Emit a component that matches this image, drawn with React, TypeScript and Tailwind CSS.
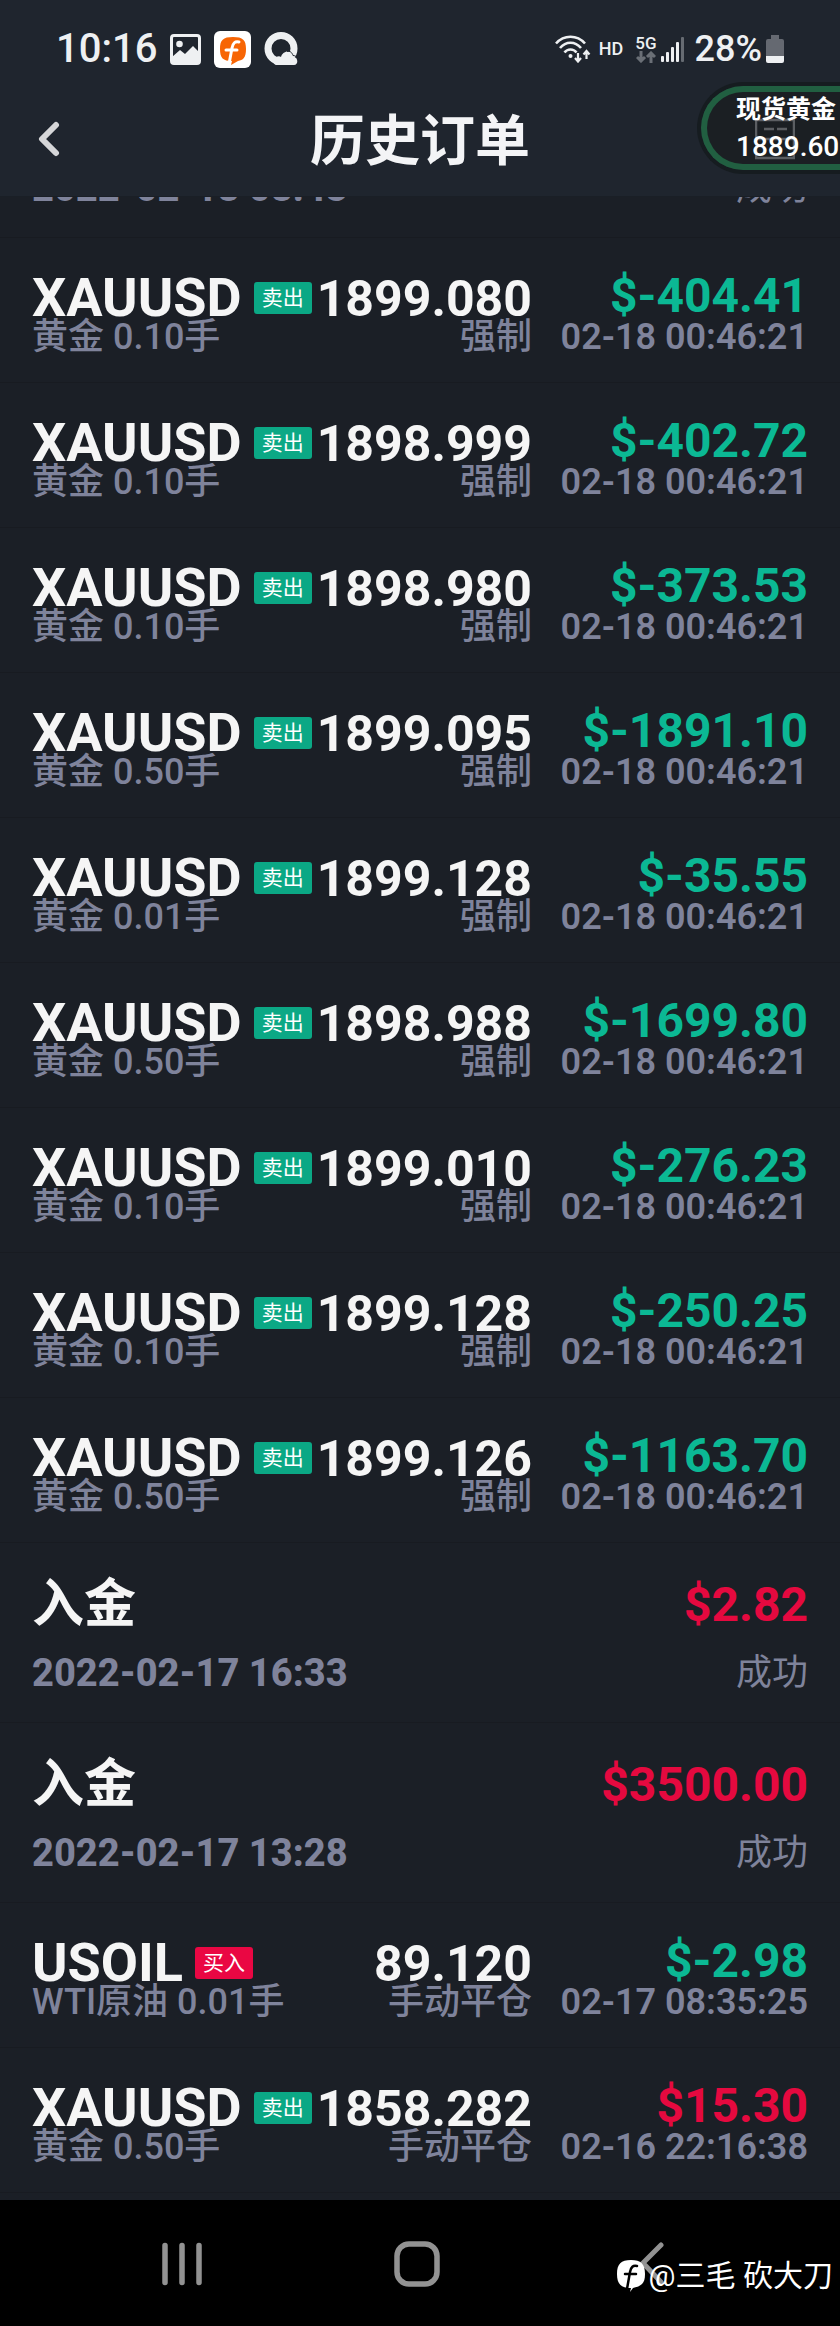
type Trade = {
  kind: 'trade';
  symbol: string;
  name: string;
  lots: string;
  side: 'buy' | 'sell';
  price: string;
  reason: string;
  profit: string;
  time: string;
};

type Deposit = {
  kind: 'deposit';
  amount: string;
  time: string;
};

type Order = Trade | Deposit;

const gold = (lots: string, price: string, profit: string, time = '02-18 00:46:21', reason = '强制'): Trade => ({
  kind: 'trade',
  symbol: 'XAUUSD',
  name: '黄金',
  side: 'sell',
  lots,
  price,
  profit,
  time,
  reason,
});

const orders: Order[] = [
  gold('0.10', '1899.080', '-404.41'),
  gold('0.10', '1898.999', '-402.72'),
  gold('0.10', '1898.980', '-373.53'),
  gold('0.50', '1899.095', '-1891.10'),
  gold('0.01', '1899.128', '-35.55'),
  gold('0.50', '1898.988', '-1699.80'),
  gold('0.10', '1899.010', '-276.23'),
  gold('0.10', '1899.128', '-250.25'),
  gold('0.50', '1899.126', '-1163.70'),
  { kind: 'deposit', amount: '2.82', time: '2022-02-17 16:33' },
  { kind: 'deposit', amount: '3500.00', time: '2022-02-17 13:28' },
  {
    kind: 'trade',
    symbol: 'USOIL',
    name: 'WTI原油',
    lots: '0.01',
    side: 'buy',
    price: '89.120',
    reason: '手动平仓',
    profit: '-2.98',
    time: '02-17 08:35:25',
  },
  gold('0.50', '1858.282', '15.30', '02-16 22:16:38', '手动平仓'),
];

function StatusBar() {
  return (
    <div className="flex h-[86px] items-center justify-between pt-3 pr-14 pl-14 text-[#eef0f2]">
      <div className="flex items-center gap-[13px]">
        <span className="text-[40px] leading-10 font-medium">10:16</span>
        <svg className="h-[31px] w-[31px]" viewBox="0 0 31 31">
          <rect x="1.5" y="1.5" width="28" height="28" rx="2.5" fill="none" stroke="currentColor" strokeWidth="3" />
          <circle cx="9.5" cy="10" r="3.3" fill="currentColor" />
          <path d="M2 23l8-7 5 4 8-8 7 7v10H2z" fill="currentColor" />
        </svg>
        <svg className="h-[37px] w-[37px]" viewBox="0 0 37 37">
          <rect width="37" height="37" rx="6" fill="#fff" />
          <path d="M17 34l1-4c-9 0-12-3-12-12S9 6 19 6s13 3 13 12-3 11-8 12z" fill="#f76504" />
          <path
            d="M25 11c-4-1-6 1-7 6l-3 16M12 19h11"
            fill="none"
            stroke="#fff"
            strokeWidth="3"
            strokeLinecap="round"
          />
        </svg>
        <svg className="h-[34px] w-[34px]" viewBox="0 0 34 34">
          <circle cx="17" cy="16.5" r="13" fill="none" stroke="currentColor" strokeWidth="7" />
          <path
            d="M12 33c-3-1-4-7 0-8 2-1 4-1 5 0 1-5 8-8 11-3 1 1 1 2 1 3 5-1 6 8 1 8z"
            fill="currentColor"
          />
          <path d="M23 19.500c3-1 5 1 6 4 2 0 3 1 4 2" fill="none" stroke="#1f252e" strokeWidth="1" />
        </svg>
      </div>
      <div className="flex items-center">
        <svg className="h-7 w-9" viewBox="0 0 36 28" fill="none" stroke="currentColor" strokeWidth="2.6">
          <path d="M1 8.500c8-9 21-9 29 0M5 13c6-7 15-7 21 0M9.500 17.500c3-4 9-4 12 0" />
          <circle cx="15.500" cy="21" r="2" fill="currentColor" stroke="none" />
          <path d="M23 18v8m-3-3l3 3.500 3-3.500M31.500 24v-8m-3 3.500l3-3.500 3 3.500" strokeWidth="2.200" />
        </svg>
        <span className="ml-2 text-[18px] leading-5 font-medium">HD</span>
        <div className="ml-3 flex flex-col items-center">
          <span className="text-[17px] leading-4 font-medium">5G</span>
          <svg className="h-3 w-5" viewBox="0 0 20 12" fill="none" stroke="#6a6f76" strokeWidth="3">
            <path d="M5 0v10M1 6l4 4 4-4M15 12V2m-4 4l4-4 4 4" />
          </svg>
        </div>
        <svg className="ml-1 h-[26px] w-6" viewBox="0 0 24 26" fill="currentColor">
          <rect x="0" y="20" width="3" height="6" rx="1" />
          <rect x="5" y="16" width="3" height="10" rx="1" />
          <rect x="10" y="11" width="3" height="15" rx="1" />
          <rect x="15" y="6" width="3" height="20" rx="1" />
          <rect x="20" y="1" width="3" height="25" rx="1" fill="#666b72" />
        </svg>
        <span className="ml-2.5 text-[36px] leading-10 font-medium">28%</span>
        <svg className="ml-1 h-7 w-[18px]" viewBox="0 0 18 28">
          <path d="M5 0h8v4h3a2 2 0 0 1 2 2v15H0V6a2 2 0 0 1 2-2h3z" fill="#656971" />
          <path d="M0 21h18v5a2 2 0 0 1-2 2H2a2 2 0 0 1-2-2z" fill="currentColor" />
        </svg>
      </div>
    </div>
  );
}

function PriceFloat() {
  return (
    <aside className="absolute top-[82px] right-0 w-[143px] rounded-l-full border-y-4 border-l-4 border-[#161c20]">
      <div className="h-[84px] rounded-l-full border-y-[6px] border-l-[6px] border-[#215f41] bg-[#1b1f23]">
        <div className="relative pt-0.5 pl-[29px] font-medium whitespace-nowrap text-white">
          <svg
            className="absolute top-[25px] left-[48px] h-[43px] w-10"
            viewBox="0 0 40 43"
            fill="none"
            stroke="#5b5e62"
            strokeWidth="2.500"
          >
            <path d="M1 3h38v38H1zM9 12h10m3 0h10M1 22h38" />
          </svg>
          <p className="relative text-[25px] leading-8 font-bold">现货黄金</p>
          <p className="relative text-[28px] leading-[42px]">1889.60</p>
        </div>
      </div>
    </aside>
  );
}

function SideBadge({ side }: { side: Trade['side'] }) {
  return (
    <span
      className={`self-center rounded-[3px] px-2 text-[21px] leading-8 font-normal ${
        side === 'buy' ? 'bg-[#ea0743]' : 'bg-[#0ba885]'
      } text-white`}
    >
      {side === 'buy' ? '买入' : '卖出'}
    </span>
  );
}

function TradeRow({ trade }: { trade: Trade }) {
  const isLoss = trade.profit.startsWith('-');
  return (
    <li className="flex border-b border-[#181b21] px-8 pt-[38px] pb-7">
      <div className="flex-1 whitespace-nowrap">
        <div className="flex h-11 items-baseline justify-between font-bold text-[#f5f5f5]">
          <div className="flex items-baseline gap-3">
            <span className="text-[54px] leading-11">{trade.symbol}</span>
            <SideBadge side={trade.side} />
          </div>
          <span className="text-[50px] leading-11">{trade.price}</span>
        </div>
        <div className="flex justify-between text-[36px] leading-[34px] font-medium text-[#7f839b]">
          <span>
            {trade.name} {trade.lots}手
          </span>
          <span>{trade.reason}</span>
        </div>
      </div>
      <div className="w-[276px] text-right whitespace-nowrap">
        <p className={`text-[48px] leading-10 font-bold ${isLoss ? 'text-[#0bb894]' : 'text-[#e5093f]'}`}>
          ${trade.profit}
        </p>
        <p className="mt-1 text-[36px] leading-[34px] font-semibold text-[#7f839b]">{trade.time}</p>
      </div>
    </li>
  );
}

function DepositRow({ amount, time }: { amount: string; time: string }) {
  return (
    <li className="w-full shrink-0 border-b border-[#181b21] px-8 pt-9 pb-[31px]">
      <div className="flex justify-between leading-[52px] font-bold">
        <span className="text-[52px] text-[#f5f5f5]">入金</span>
        <span className="text-[48px] text-[#e5093f]">${amount}</span>
      </div>
      <div className="mt-6 flex justify-between text-[#7f839b]">
        <span className="text-[38px] leading-9 font-extrabold">{time}</span>
        <span className="text-[36px] leading-9">成功</span>
      </div>
    </li>
  );
}

function NavBar() {
  return (
    <nav className="relative grid h-[126px] grid-cols-3 items-center bg-black pt-0.5 pr-[70px] pl-16 text-[#929292]">
      <button type="button" aria-label="最近任务" className="justify-self-center">
        <svg className="h-11 w-[42px]" viewBox="0 0 42 44" stroke="currentColor" strokeWidth="5.500" strokeLinecap="round">
          <path d="M4 3.500v37M21 3.500v37M38 3.500v37" />
        </svg>
      </button>
      <button type="button" aria-label="主屏幕" className="justify-self-center">
        <svg className="h-[46px] w-[46px]" viewBox="0 0 46 46" fill="none" stroke="currentColor" strokeWidth="5.500">
          <rect x="3" y="3" width="40" height="40" rx="12" />
        </svg>
      </button>
      <button type="button" aria-label="返回" className="justify-self-center">
        <svg
          className="h-11 w-6"
          viewBox="0 0 24 44"
          fill="none"
          stroke="currentColor"
          strokeWidth="5"
          strokeLinecap="round"
        >
          <path d="M21 3L3 21l18 19" />
        </svg>
      </button>
      <div className="absolute right-[7px] bottom-8 flex items-center gap-1 text-white">
        <svg className="h-8 w-7" viewBox="0 0 28 32">
          <path d="M13 32l1-4C4 28 0 24 0 14S4 0 14 0s14 4 14 14-4 12-12 14z" fill="#fff" />
          <path
            d="M20 6c-4-1-6 1-7 6l-3 17M8 14h11"
            fill="none"
            stroke="#000"
            strokeWidth="2.500"
            strokeLinecap="round"
          />
        </svg>
        <span className="text-[30px] leading-9">@三毛 砍大刀</span>
      </div>
    </nav>
  );
}

export default function App() {
  return (
    <div
      lang="zh-CN"
      className="relative overflow-hidden bg-[#1b1f26] font-['Roboto','Noto_Sans_CJK_SC',sans-serif]"
    >
      <header className="border-b border-[#1a1f26] bg-[#1f252e]">
        <StatusBar />
        <div className="grid h-[110px] grid-cols-[1fr_auto_1fr] items-center px-9">
          <button type="button" aria-label="返回" className="justify-self-start pb-1 text-[#d5d6d8]">
            <svg
              className="h-9 w-6"
              viewBox="0 0 24 36"
              fill="none"
              stroke="currentColor"
              strokeWidth="6"
              strokeLinecap="round"
              strokeLinejoin="round"
            >
              <path d="M20 4L6 18l14 14" />
            </svg>
          </button>
          <h1 className="text-[55px] leading-[60px] font-bold text-[#f3f4f6]">历史订单</h1>
        </div>
      </header>
      <PriceFloat />

      <main className="pb-[7px]">
        {/* Row scrolled under the header */}
        <ul className="flex h-[41px] items-end overflow-hidden">
          <DepositRow amount="500.00" time="2022-02-18 08:43" />
        </ul>
        <ul>
          {orders.map((order, index) =>
            order.kind === 'trade' ? (
              <TradeRow key={index} trade={order} />
            ) : (
              <DepositRow key={index} amount={order.amount} time={order.time} />
            ),
          )}
        </ul>
      </main>

      <NavBar />
    </div>
  );
}
